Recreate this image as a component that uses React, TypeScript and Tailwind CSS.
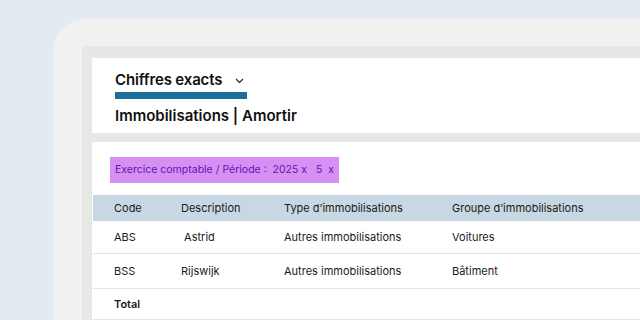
import React from "react";

const font = { fontFamily: "Inter, Lato, sans-serif" };

export default function App() {
  const rows = [
    { code: "ABS", desc: "\u00a0Astrid", type: "Autres immobilisations", group: "Voitures", h: "h-[33px]" },
    { code: "BSS", desc: "Rijswijk", type: "Autres immobilisations", group: "Bâtiment", h: "h-[35px]" },
  ];
  return (
    <div className="w-[640px] h-[320px] overflow-hidden bg-[#e3eaf1] pt-[19px] pl-[53px]" style={font}>
      <div className="h-full bg-[#f1f1f1] rounded-tl-[32px] pt-[27px] pl-[29px]">
        <div className="h-full bg-[#e7e7e5] pt-[12px] pl-[10px] flex flex-col">
          <div className="h-[76px] bg-white pl-[23px] pt-[11px] flex flex-col">
            <div className="flex items-center h-[20px]">
              <span className="text-[15px] font-semibold text-[#111] tracking-[-0.15px] leading-none">Chiffres exacts</span>
              <svg className="ml-[13px] mt-[3px]" width="9" height="6" viewBox="0 0 9 6">
                <path d="M1 1 L4.5 4.5 L8 1" fill="none" stroke="#222" strokeWidth="1.2" />
              </svg>
            </div>
            <div className="w-[132px] h-[7px] bg-[#1a6e98] mt-[3px]" />
            <div className="mt-[9px] text-[15px] font-semibold text-[#111] leading-none tracking-[0px]">
              Immobilisations | Amortir
            </div>
          </div>
          <div className="h-[9px]" />
          <div className="flex-1 bg-white pt-[13px]">
            <div className="pl-[18px]">
              <div className="inline-flex items-center h-[26px] bg-[#d490f2] px-[5px] text-[10.5px] text-[#6a10b0] leading-none">
                Exercice comptable / Période :&nbsp; 2025 x&nbsp;&nbsp; 5&nbsp; x
              </div>
            </div>
            <div className="mt-[12px] ml-[1px] text-[11px] text-[#1a1a1a]">
              <div className="flex items-center h-[26px] bg-[#c8d8e2]">
                <div className="w-[88px] pl-[21px]">Code</div>
                <div className="w-[103px]">Description</div>
                <div className="w-[168px]">Type d’immobilisations</div>
                <div>Groupe d’immobilisations</div>
              </div>
              {rows.map((r) => (
                <div key={r.code} className={`flex items-center ${r.h} border-b border-[#e4e4e4]`}>
                  <div className="w-[88px] pl-[21px]">{r.code}</div>
                  <div className="w-[103px]">{r.desc}</div>
                  <div className="w-[168px]">{r.type}</div>
                  <div>{r.group}</div>
                </div>
              ))}
              <div className="flex items-center h-[31px] border-b border-[#e4e4e4]">
                <div className="pl-[21px] font-semibold">Total</div>
              </div>
            </div>
          </div>
        </div>
      </div>
    </div>
  );
}
